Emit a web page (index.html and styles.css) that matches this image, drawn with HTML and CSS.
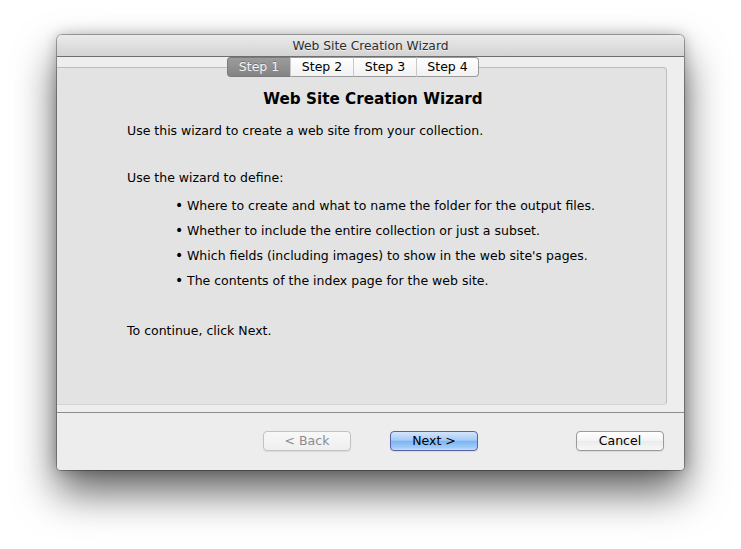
FILE: index.html
```html
<!DOCTYPE html>
<html>
<head>
<meta charset="utf-8">
<title>Web Site Creation Wizard</title>
<link rel="stylesheet" href="styles.css">
</head>
<body>
<div class="window">
  <div class="titlebar">Web Site Creation Wizard</div>
  <div class="content">
    <div class="tabs">
      <div class="tab selected">Step 1</div>
      <div class="tab">Step 2</div>
      <div class="tab">Step 3</div>
      <div class="tab">Step 4</div>
    </div>
    <div class="panel">
      <h1 class="heading">Web Site Creation Wizard</h1>
      <p class="p1">Use this wizard to create a web site from your collection.</p>
      <p class="p2">Use the wizard to define:</p>
      <ul class="list">
        <li>Where to create and what to name the folder for the output files.</li>
        <li>Whether to include the entire collection or just a subset.</li>
        <li>Which fields (including images) to show in the web site's pages.</li>
        <li>The contents of the index page for the web site.</li>
      </ul>
      <p class="p3">To continue, click Next.</p>
    </div>
  </div>
  <div class="footer">
    <div class="btn disabled">&lt; Back</div>
    <div class="btn default">Next &gt;</div>
    <div class="btn cancel">Cancel</div>
  </div>
</div>
</body>
</html>
```

FILE: styles.css
```css
html, body {
  margin: 0;
  padding: 0;
  background: #ffffff;
}
body {
  font-family: "DejaVu Sans", "Liberation Sans", sans-serif;
  font-size: 12.5px;
  color: #000;
  min-height: 549px;
  overflow: hidden;
}
.window {
  margin: 35px 0 0 57px;
  width: 627px;
  height: 435px;
  border-radius: 5px 5px 4px 4px;
  overflow: hidden;
  background: #ececec;
  box-shadow: 0 0 0 1px rgba(0,0,0,0.3), 0 0 14px rgba(0,0,0,0.25), 0 22px 42px rgba(0,0,0,0.62);
  display: flex;
  flex-direction: column;
}
.titlebar {
  height: 21px;
  line-height: 23px;
  border-bottom: 1px solid #6e6e6e;
  background: linear-gradient(#ebebeb, #d3d3d3);
  text-align: center;
  font-size: 12.3px;
  color: #2e2e2e;
  text-shadow: 0 1px 0 rgba(255,255,255,0.6);
  flex: none;
}
.content {
  height: 355px;
  border-bottom: 1px solid #8c8c8c;
  flex: none;
  background: #eeeeee;
}
.tabs {
  display: flex;
  justify-content: center;
  margin-left: -18px;
  margin-right: 17px;
  position: relative;
  z-index: 1;
}
.tab {
  width: 62px;
  height: 18px;
  line-height: 18px;
  text-align: center;
  background: linear-gradient(#ffffff, #f1f1f1);
  border-top: 1px solid #9a9a9a;
  border-bottom: 1px solid #9a9a9a;
  border-left: 1px solid #c9c9c9;
  color: #000;
}
.tab:first-child {
  border-left: 1px solid #8a8a8a;
  border-radius: 4px 0 0 4px;
}
.tab:last-child {
  width: 61px;
  border-right: 1px solid #9a9a9a;
  border-radius: 0 4px 4px 0;
}
.tab.selected {
  background: linear-gradient(#9c9c9c, #848484);
  border-color: #7a7a7a;
  color: #f4f4f4;
  text-shadow: 0 -1px 0 rgba(0,0,0,0.25);
}
.panel {
  margin: -10px 17px 0 -18px;
  height: 316px;
  padding-top: 20px;
  background: #e3e3e3;
  border: 1px solid #bdbdbd;
  border-bottom-color: #d4d4d4;
  border-radius: 4px;
  padding-left: 87px;
}
.heading {
  margin: 0 0 0 -47px;
  font-size: 15.2px;
  line-height: 22px;
  font-weight: bold;
  text-align: center;
}
.panel p {
  margin: 0;
  line-height: 20px;
}
.panel .p1 { margin-top: 11px; }
.panel .p2 { margin-top: 27px; }
.list {
  list-style: none;
  margin: 5px 0 0 0;
  padding: 0 0 0 48px;
}
.list li {
  line-height: 25px;
  display: flex;
}
.list li::before {
  content: "\2022";
  width: 12px;
  flex: none;
  font-size: 14px;
}
.panel .p3 { margin-top: 28px; }
.footer {
  flex: 1;
  display: flex;
  align-items: flex-start;
  padding: 18px 20px 0 206px;
  background: #ededed;
}
.btn {
  width: 86px;
  height: 18px;
  line-height: 18px;
  text-align: center;
  border-radius: 4px;
  border: 1px solid #9a9a9a;
  background: linear-gradient(#ffffff, #f3f3f3 50%, #ebebeb 51%, #f7f7f7);
  box-shadow: 0 1px 1px rgba(0,0,0,0.08);
}
.btn.disabled {
  color: #8c8c8c;
  border-color: #c2c2c2;
  background: linear-gradient(#f8f8f8, #efefef);
}
.btn.default {
  margin-left: 39px;
  border-color: #5c5fa6;
  background: linear-gradient(#d3e5fb, #a6cbf7 45%, #7db5f3 52%, #9fcaf8 85%, #c4e0fc);
}
.btn.cancel {
  margin-left: auto;
}
```
